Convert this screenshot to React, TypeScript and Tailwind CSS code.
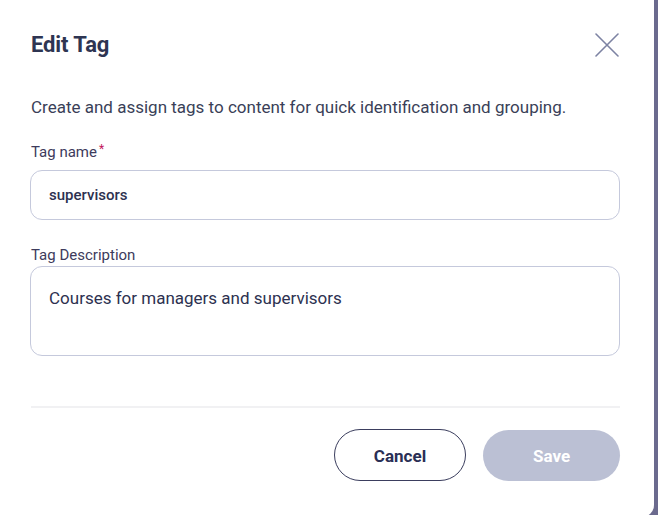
import React from "react";

export default function App() {
  return (
    <div className="w-[658px] h-[515px] bg-[#6b6a8e] overflow-hidden" style={{ fontFamily: "Roboto, 'Liberation Sans', sans-serif" }}>
      <div className="w-[654px] h-[517px] bg-white rounded-br-[12px] flex flex-col px-[31px]">
        <div className="flex items-start justify-between pt-[31px] h-[59px]">
          <h1 className="text-[22px] leading-[28px] font-bold text-[#2e3552] tracking-[-0.1px]">Edit Tag</h1>
          <button className="mt-[2px] mr-[4px] w-[24px] h-[24px] text-[#7d83a3]" aria-label="Close">
            <svg viewBox="0 0 24 24" width="24" height="24" fill="none" stroke="currentColor" strokeWidth="1.6" strokeLinecap="round">
              <path d="M1 1 L23 23 M23 1 L1 23" />
            </svg>
          </button>
        </div>
        <p className="mt-[36px] text-[17px] leading-[24px] text-[#3a3f58]">
          Create and assign tags to content for quick identification and grouping.
        </p>
        <label className="mt-[23px] text-[15px] leading-[20px] text-[#3d3b5c] flex">
          Tag name<span className="text-[#c2185b] text-[12px] leading-[14px] ml-[2px]">*</span>
        </label>
        <div className="mt-[8px] ml-[-1px] mr-[3px] h-[50px] border border-[#c5c9dc] rounded-[12px] flex items-center px-[18px]">
          <span className="text-[15px] font-medium text-[#2d3150]">supervisors</span>
        </div>
        <label className="mt-[25px] text-[15px] leading-[20px] text-[#3d3b5c]">Tag Description</label>
        <div className="mt-[1px] ml-[-1px] mr-[3px] h-[90px] border border-[#c5c9dc] rounded-[12px] px-[18px] pt-[19px]">
          <span className="text-[17px] leading-[24px] text-[#2d3150]">Courses for managers and supervisors</span>
        </div>
        <div className="mt-[50px] mr-[3px] h-[2px] bg-[#f1f1f3]" />
        <div className="mt-[21px] mr-[3px] flex justify-end items-center gap-[17px]">
          <button className="w-[132px] h-[52px] pt-[3px] rounded-full border border-[#3b3e5e] text-[17px] font-bold text-[#2a2f55]">Cancel</button>
          <button className="w-[137px] h-[51px] pt-[3px] rounded-full bg-[#bbc0d4] text-[17px] font-bold text-white">Save</button>
        </div>
      </div>
    </div>
  );
}
